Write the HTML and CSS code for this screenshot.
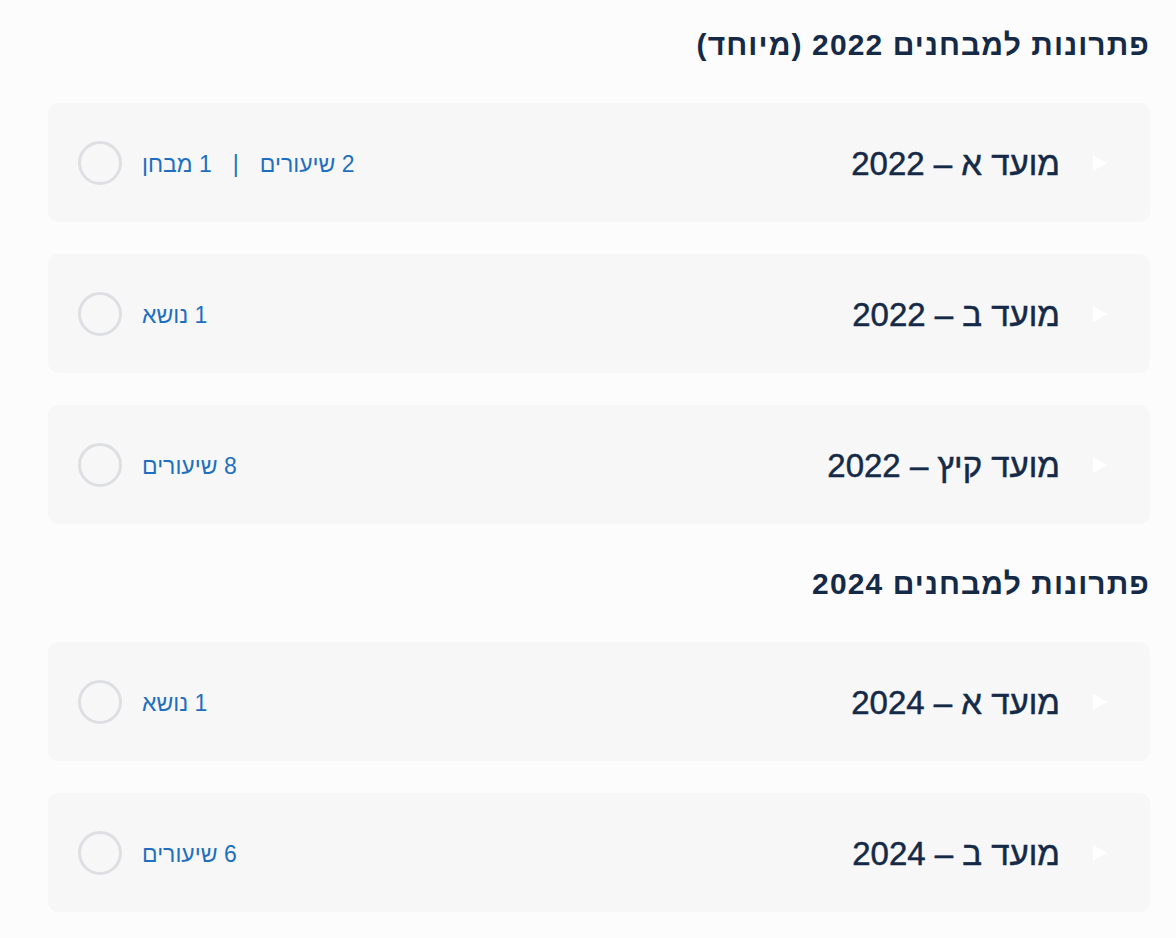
FILE: index.html
```html
<!DOCTYPE html>
<html lang="he" dir="rtl">
<head>
<meta charset="utf-8">
<link rel="stylesheet" href="styles.css">
</head>
<body>
<div class="page">
  <section class="section">
    <h2 class="section-title">פתרונות למבחנים 2022 (מיוחד)</h2>
    <div class="list">
      <div class="item">
        <span class="arrow"></span>
        <span class="title">מועד א – 2022</span>
        <span class="meta"><span>2 שיעורים</span><span class="sep">|</span><span>1 מבחן</span></span>
        <span class="circle"></span>
      </div>
      <div class="item">
        <span class="arrow"></span>
        <span class="title">מועד ב – 2022</span>
        <span class="meta"><span>1 נושא</span></span>
        <span class="circle"></span>
      </div>
      <div class="item">
        <span class="arrow"></span>
        <span class="title">מועד קיץ – 2022</span>
        <span class="meta"><span>8 שיעורים</span></span>
        <span class="circle"></span>
      </div>
    </div>
  </section>
  <section class="section">
    <h2 class="section-title">פתרונות למבחנים 2024</h2>
    <div class="list">
      <div class="item">
        <span class="arrow"></span>
        <span class="title">מועד א – 2024</span>
        <span class="meta"><span>1 נושא</span></span>
        <span class="circle"></span>
      </div>
      <div class="item">
        <span class="arrow"></span>
        <span class="title">מועד ב – 2024</span>
        <span class="meta"><span>6 שיעורים</span></span>
        <span class="circle"></span>
      </div>
    </div>
  </section>
</div>
</body>
</html>
```

FILE: styles.css
```css
html, body {
  margin: 0;
  padding: 0;
  background: #fcfcfc;
}
body {
  font-family: "Liberation Sans", "DejaVu Sans", sans-serif;
  color: #152a47;
}
.page {
  padding: 25px 26px 0 48px;
  display: flex;
  flex-direction: column;
  gap: 40px;
}
.section-title {
  margin: 0 0 38px 0;
  font-size: 30px;
  line-height: 40px;
  font-weight: 700;
  letter-spacing: 1.1px;
  color: #152a47;
}
.list {
  display: flex;
  flex-direction: column;
  gap: 32px;
}
.item {
  height: 119px;
  background: #f7f7f8;
  border-radius: 10px;
  display: flex;
  align-items: center;
  padding: 0 43px 0 30px;
  box-sizing: border-box;
}
.arrow {
  width: 0;
  height: 0;
  border-top: 8.5px solid transparent;
  border-bottom: 8.5px solid transparent;
  border-left: 14px solid #ffffff;
  margin-left: 33px;
  flex: none;
}
.title {
  font-size: 33px;
  line-height: 40px;
  font-weight: 400;
  -webkit-text-stroke: 0.5px #152a47;
  color: #152a47;
  padding-top: 2px;
}
.meta {
  margin-right: auto;
  display: flex;
  align-items: center;
  gap: 21px;
  font-size: 23px;
  color: #1e6fbf;
  margin-left: 20px;
  padding-top: 3px;
}
.circle {
  width: 44px;
  height: 44px;
  border: 3px solid #dedfe2;
  border-radius: 50%;
  box-sizing: border-box;
  flex: none;
}
```
